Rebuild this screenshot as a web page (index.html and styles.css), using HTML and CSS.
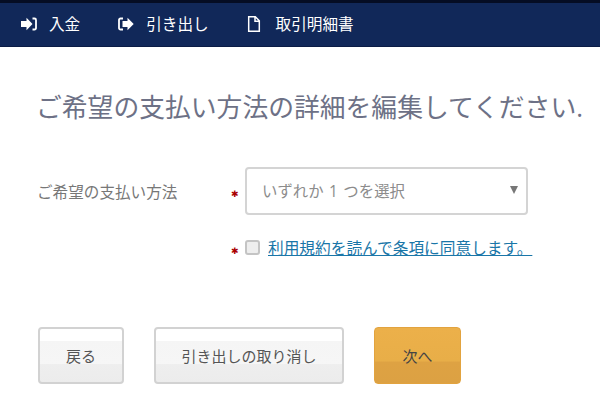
FILE: index.html
```html
<!DOCTYPE html>
<html lang="ja">
<head>
    <meta charset="UTF-8">
    <title>お支払い方法</title>
    <link rel="stylesheet" href="styles.css">
</head>
<body>

    <!-- Navbar -->
    <div class="navbar">
        <a class="nav-link" href="#">
            <svg class="nav-icon" viewBox="0 0 16 14"><path d="M0 4h5.500V.8L11.500 7l-6 6.200V10H0z" fill="#fff"/><path d="M11.500 1.500h2A1.500 1.500 0 0 1 15 3v8a1.500 1.500 0 0 1-1.500 1.500h-2" fill="none" stroke="#fff" stroke-width="1.800"/></svg>
            入金
        </a>
        <a class="nav-link" href="#">
            <svg class="nav-icon" viewBox="0 0 16 14"><path d="M5 1.500H2.500A1.500 1.500 0 0 0 1 3v8a1.500 1.500 0 0 0 1.500 1.500H5" fill="none" stroke="#fff" stroke-width="1.800"/><path d="M4.500 4h5V.8l6.200 6.200-6.200 6.200V10h-5z" fill="#fff"/></svg>
            引き出し
        </a>
        <a class="nav-link" href="#">
            <svg class="nav-icon doc" viewBox="0 0 14 16"><path d="M1.700.8h6.600l4 4v10.400H1.700z M8 1v4.300h4.300" fill="none" stroke="#fff" stroke-width="1.500"/></svg>
            取引明細書
        </a>
    </div>

    <!-- Main Content -->
    <div class="container">
        <h1>ご希望の支払い方法の詳細を編集してください.</h1>

        <div class="form-row">
            <label class="row-label">ご希望の支払い方法</label>
            <span class="required">✱</span>
            <div class="select-box">
                <span>いずれか 1 つを選択</span>
                <span class="arrow"></span>
            </div>
        </div>

        <div class="terms-row">
            <span class="required">✱</span>
            <input type="checkbox" class="terms-check">
            <a class="terms-link" href="#">利用規約を読んで条項に同意します。</a>
        </div>

        <div class="btn-group">
            <button class="btn back">戻る</button>
            <button class="btn cancel">引き出しの取り消し</button>
            <button class="btn next">次へ</button>
        </div>
    </div>

</body>
</html>
```

FILE: styles.css
```css
/* Global Styles */
* {
    margin: 0;
    padding: 0;
    box-sizing: border-box;
}

html, body {
    height: 415px;
    overflow: hidden;
}

body {
    font-family: "Open Sans", "Noto Sans CJK JP", sans-serif;
    color: #6f6f6f;
    background-color: #fff;
}

/* Navbar */
.navbar {
    display: flex;
    align-items: center;
    height: 47px;
    padding: 0 0 2px 21px;
    background-color: #112859;
    border-top: 3px solid #050d24;
    border-bottom: 1px solid #0b1c45;
}

.nav-link {
    display: flex;
    align-items: center;
    color: #fff;
    text-decoration: none;
    font-size: 15.6px;
    margin-right: 38px;
}

.nav-icon {
    width: 16px;
    height: 14px;
    margin-right: 12px;
}

.nav-icon.doc {
    height: 16px;
    width: 14px;
    margin-right: 15px;
}

/* Main Content */
.container {
    padding: 0 0 0 37px;
}

h1 {
    font-size: 25.8px;
    font-weight: 400;
    color: #6d7186;
    margin: 43px 0 0 -1px;
    line-height: 34px;
    white-space: nowrap;
}

.form-row {
    display: flex;
    align-items: center;
    margin-top: 43px;
}

.row-label {
    width: 194px;
    font-size: 15.6px;
    color: #777;
}

.required {
    color: #a00;
    font-size: 9px;
    width: 14px;
    padding-top: 5px;
}

.select-box {
    display: flex;
    align-items: center;
    justify-content: space-between;
    width: 283px;
    height: 48px;
    padding: 0 8px 2px 15px;
    border: 2px solid #d4d4d4;
    border-radius: 4px;
    font-size: 15.4px;
    word-spacing: 1.5px;
    color: #8c8c8c;
}

.arrow {
    width: 0;
    height: 0;
    border-left: 4px solid transparent;
    border-right: 4px solid transparent;
    border-top: 8px solid #777;
}

.terms-row {
    display: flex;
    align-items: center;
    margin: 21px 0 0 194px;
}

.terms-check {
    appearance: none;
    width: 15px;
    height: 15px;
    margin-right: 8px;
    background-color: #eee;
    border: 2px solid #c4c4c4;
    border-radius: 3px;
}

.terms-link {
    color: #1a76a8;
    font-size: 15.7px;
    text-decoration: underline;
}

/* Buttons */
.btn-group {
    display: flex;
    margin-top: 68px;
    margin-left: 1px;
}

.btn {
    height: 57px;
    font-family: inherit;
    font-size: 15px;
    color: #555;
    border: 2px solid #d2d2d2;
    border-radius: 4px;
    background: linear-gradient(#fff 0, #fff 22%, #f5f5f5 23%, #f6f6f6 66%, #eee 67%, #ececec 100%);
}

.back {
    width: 86px;
    margin-right: 30px;
}

.cancel {
    width: 190px;
    margin-right: 30px;
}

.next {
    width: 87px;
    color: #444;
    border: 1px solid #e2a33f;
    background: linear-gradient(#ecb04a 0, #e8ae48 60%, #dea243 62%, #dca143 100%);
}
```
